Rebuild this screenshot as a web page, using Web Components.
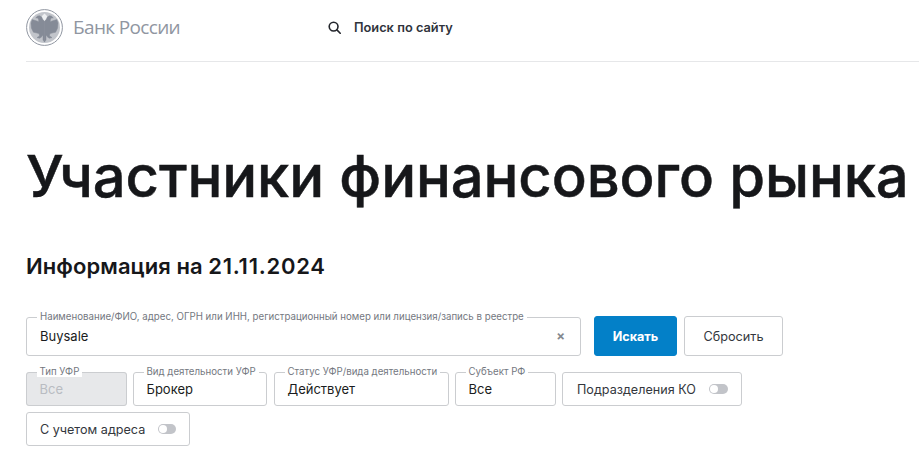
<!DOCTYPE html>
<html lang="ru"><head><meta charset="utf-8"><title>Участники финансового рынка</title>
<style>
html,body{margin:0;padding:0;background:#fff;overflow:hidden}
body{font-family:Inter,"Noto Sans",sans-serif;color:#1a1c20;width:919px;height:451px}
.row{display:flex;align-items:flex-end}
.date{letter-spacing:.75px}
</style></head><body>
<cbr-page>
<cbr-header></cbr-header>
<cbr-title>Участники финансового рынка</cbr-title>
<cbr-sub>Информация на <span class="date">21.11.2024</span></cbr-sub>
<cbr-filters>
  <div class="row" style="gap:7px;height:40px;margin-bottom:16px">
    <cbr-field style="width:555px;height:44px;margin-right:6px" label="Наименование/ФИО, адрес, ОГРН или ИНН, регистрационный номер или лицензия/запись в реестре" clear>Buysale</cbr-field>
    <cbr-btn primary style="width:83px">Искать</cbr-btn>
    <cbr-btn style="width:99px">Сбросить</cbr-btn>
  </div>
  <div class="row" style="gap:6px;height:34px;margin-bottom:6px">
    <cbr-field style="width:101px" label="Тип УФР" disabled>Все</cbr-field>
    <cbr-field style="width:134px;margin-right:1px" label="Вид деятельности УФР">Брокер</cbr-field>
    <cbr-field style="width:175px" label="Статус УФР/вида деятельности">Действует</cbr-field>
    <cbr-field style="width:101px" label="Субъект РФ">Все</cbr-field>
    <cbr-toggle style="width:180px">Подразделения КО</cbr-toggle>
  </div>
  <cbr-toggle style="width:164px;padding-left:13px">С учетом адреса</cbr-toggle>
</cbr-filters>
</cbr-page>
<script>
function def(name, html){
  customElements.define(name, class extends HTMLElement{
    connectedCallback(){
      if(this.shadowRoot) return;
      const r=this.attachShadow({mode:'open'});
      r.innerHTML=typeof html==='function'?html(this):html;
    }
  });
}
const half='M18.5 12.6L16.7 10.6 15.8 8.2 13.8 6.8 11.6 7.1 9.7 8.9 11.8 9 12.5 10.2 12.9 12.8 10 11.7 6.2 10.6 5 14 5.4 19 7.4 23.2 10 23.8 13 24.6 13.6 27 11 28.6 13.6 29.2 15.6 28 16.1 26.2 17 27.2 17 31 18.5 33Z';
def('cbr-page',`<style>:host{display:block;padding-left:26px}</style><slot></slot>`);
def('cbr-header',`<style>
:host{display:flex;align-items:center;height:61px;border-bottom:1px solid #e6e7e9;font-family:Inter,sans-serif}
.logo{display:flex;align-items:center;gap:10px;width:302px;margin-top:-7px}
.brand{font:400 19px "Open Sans",sans-serif;color:#9096a1;letter-spacing:-.65px;white-space:nowrap}
.search{display:flex;align-items:center;gap:13px;margin-top:-7px;font:600 12.8px Inter,sans-serif;color:#30343c}
svg{display:block}
</style>
<div class="logo">
<svg width="37" height="37" viewBox="0 0 37 37" aria-hidden="true">
<circle cx="18.5" cy="18.5" r="17.9" fill="none" stroke="#9096a1" stroke-width="1"/>
<circle cx="18.5" cy="18.5" r="15.5" fill="#c2c5cb"/>
<g fill="#858b97" stroke="#858b97" stroke-width=".5" stroke-linejoin="round">
<path d="${half}"/><path d="${half}" transform="matrix(-1 0 0 1 37 0)"/>
</g>
<path d="M18.5 4.5L15.8 7.3 17 10 18.5 11.7 20 10 21.2 7.3Z" fill="#eef0f2"/>
</svg>
<span class="brand">Банк России</span></div>
<div class="search"><svg width="13" height="13" viewBox="0 0 13 13" fill="none" stroke="#23262c" stroke-width="1.6" aria-hidden="true"><circle cx="5.6" cy="5.6" r="4.4"/><path d="M8.9 8.9l3.3 3.3" stroke-linecap="round"/></svg><span>Поиск по сайту</span></div>`);
def('cbr-title',`<style>:host{display:block;margin-top:74px;height:80px;font:500 58px/80px Inter,sans-serif;-webkit-text-stroke:.5px #16171a;color:#16171a;white-space:nowrap;letter-spacing:-.1px}</style><slot></slot>`);
def('cbr-sub',`<style>:host{display:block;margin-top:30px;height:40px;font:600 22px/40px Inter,sans-serif;color:#16171a;white-space:nowrap;letter-spacing:.07px}</style><slot></slot>`);
def('cbr-filters',`<style>:host{display:block;margin-top:30px}</style><slot></slot>`);
def('cbr-field',el=>{
 const dis=el.hasAttribute('disabled'), clear=el.hasAttribute('clear');
 return `<style>
:host{display:block;box-sizing:border-box;height:39px;font-family:Inter,sans-serif}
fieldset{box-sizing:border-box;margin:0;padding:0 ${clear?13:12.5}px;height:100%;border:1px solid #cbcdd0;border-radius:3px;display:flex;align-items:center;background:${dis?'#e7e8ea':'#fff'};min-width:0}
legend{font:400 9.7px/10px Inter,sans-serif;color:#74787f;padding:0 3px;margin-left:-3px;white-space:nowrap;${dis?'background:#fff;':''}}
.v{font-size:13px;color:${dis?'#b9bcc2':'#1a1c20'};flex:1;margin-top:-5px}
.x{font-size:13px;font-weight:700;color:#85898f;margin-top:-5px;margin-right:2px}
</style><fieldset><legend>${el.getAttribute('label')}</legend><span class="v"><slot></slot></span>${clear?'<span class="x">×</span>':''}</fieldset>`});
def('cbr-btn',el=>{
 const p=el.hasAttribute('primary');
 return `<style>:host{display:block;box-sizing:border-box;height:40px}
button{width:100%;height:100%;box-sizing:border-box;border:1px solid ${p?'#0380c8':'#cbcdd0'};border-radius:3px;background:${p?'#0380c8':'#fff'};color:${p?'#fff':'#33373d'};font:${p?700:400} ${p?12.6:12.7}px Inter,sans-serif;padding:0}</style><button><slot></slot></button>`});
def('cbr-toggle',`<style>:host{display:flex;box-sizing:border-box;height:34px;align-items:center;border:1px solid #cbcdd0;border-radius:3px;padding:0 13px 0 14px;font:400 12.6px Inter,sans-serif;color:#33373d;white-space:nowrap;gap:13px}
i{display:block;width:19px;height:10px;border-radius:5px;background:#c2c4c9;position:relative}
i::after{content:"";position:absolute;left:1px;top:1px;width:8px;height:8px;border-radius:50%;background:#fff}</style><slot></slot><i></i>`);
</script>
</body></html>
